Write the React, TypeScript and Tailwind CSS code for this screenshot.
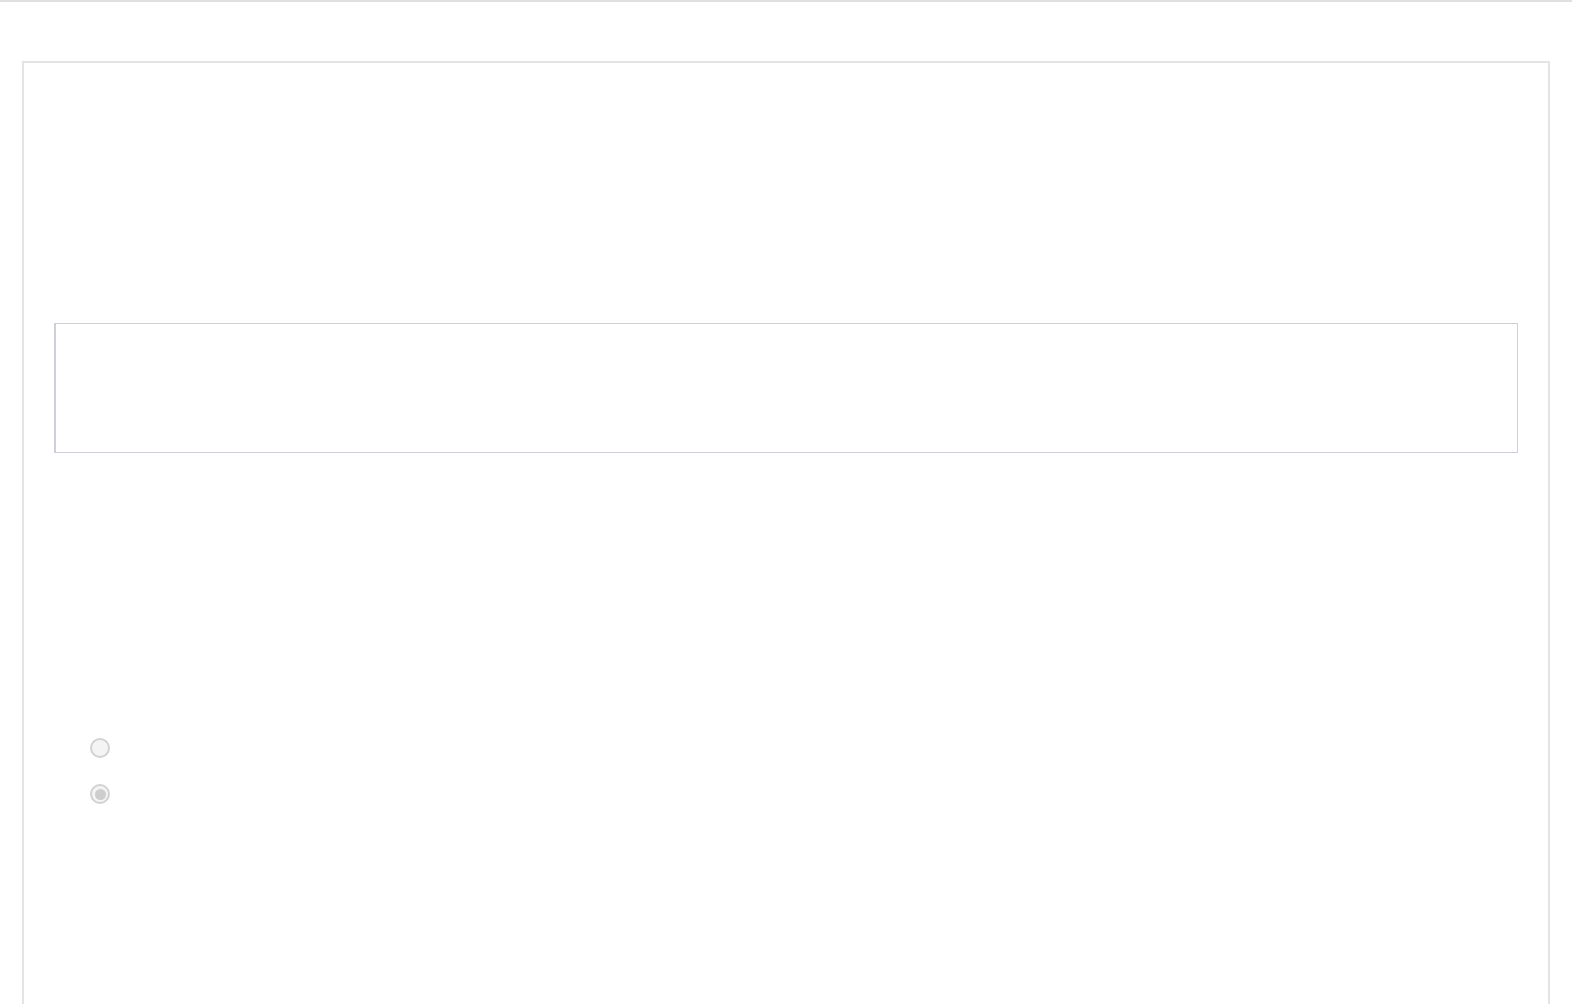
import React, { useState } from "react";

const Radio: React.FC<{ checked: boolean; onClick: () => void }> = ({ checked, onClick }) => (
  <button
    type="button"
    onClick={onClick}
    className="w-[20px] h-[20px] rounded-full border-2 border-[#d2d2d2] bg-[#f4f4f4] flex items-center justify-center"
  >
    {checked && <span className="w-[11px] h-[11px] rounded-full bg-[#cdcdcd]" />}
  </button>
);

const App: React.FC = () => {
  const [choice, setChoice] = useState<number>(1);
  const [text, setText] = useState<string>("");

  return (
    <div className="min-h-screen bg-white border-t-2 border-[#e4dfdf] font-['Liberation_Sans',sans-serif] overflow-hidden">
      <div className="pt-[59px] pl-[22px] pr-[22px]">
        <div className="border-2 border-[#e4e4e4] h-[1000px] px-[30px] pt-[260px]">
          <textarea
            value={text}
            onChange={(e) => setText(e.target.value)}
            className="block w-full h-[130px] border border-l-2 border-[#ccd0d9] resize-none outline-none"
          />
          <div className="mt-[285px] pl-[36px] flex flex-col gap-[26px]">
            <Radio checked={choice === 0} onClick={() => setChoice(0)} />
            <Radio checked={choice === 1} onClick={() => setChoice(1)} />
          </div>
        </div>
      </div>
    </div>
  );
};

export default App;
